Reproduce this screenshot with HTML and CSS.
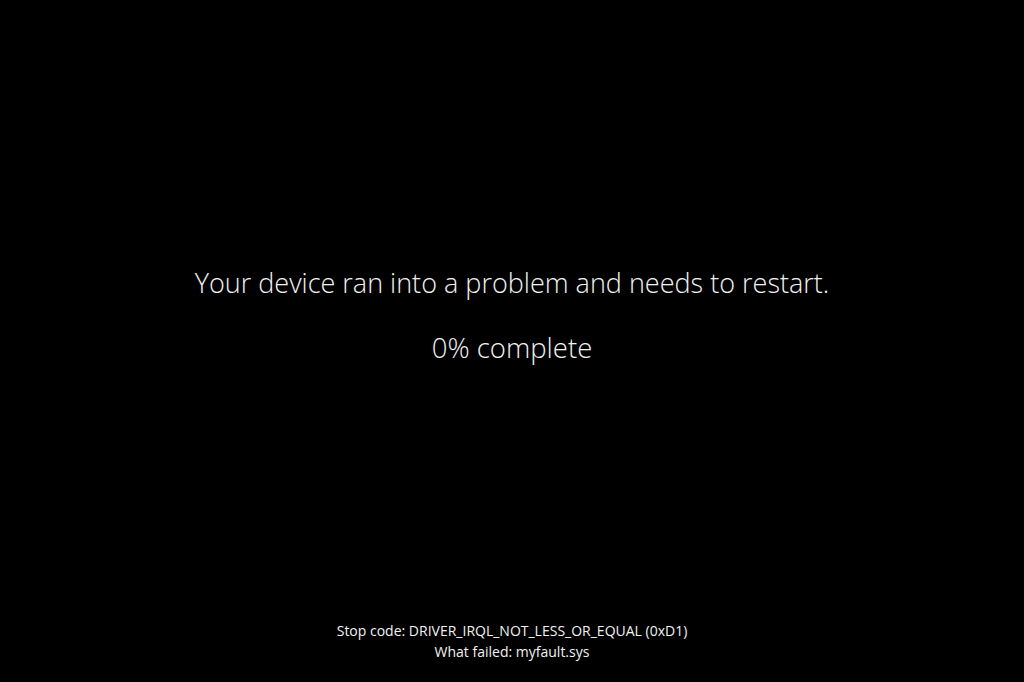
FILE: index.html
```html
<!DOCTYPE html>
<html>
<head>
<meta charset="utf-8">
<link rel="stylesheet" href="styles.css">
</head>
<body>
<div class="screen">
  <div class="main">
    <p class="msg">Your device ran into a problem and needs to restart.</p>
    <p class="progress">0% complete</p>
  </div>
  <div class="footer">
    <p class="line">Stop code: DRIVER_IRQL_NOT_LESS_OR_EQUAL (0xD1)</p>
    <p class="line">What failed: myfault.sys</p>
  </div>
</div>
</body>
</html>
```
FILE: styles.css
```css
html, body {
  margin: 0;
  padding: 0;
  background: #000;
}
.screen {
  width: 1024px;
  height: 682px;
  display: flex;
  flex-direction: column;
  align-items: center;
  color: #f2f2f2;
  font-family: "Open Sans", "Noto Sans", sans-serif;
  font-weight: 300;
}
.main {
  padding-top: 263px;
  text-align: center;
}
.msg {
  margin: 0;
  font-size: 27px;
  line-height: 40px;
}
.progress {
  margin: 25px 0 0;
  font-size: 27.5px;
  line-height: 40px;
}
.footer {
  margin-top: auto;
  padding-bottom: 20px;
  text-align: center;
}
.line {
  margin: 0;
  font-size: 14px;
  line-height: 21px;
  font-weight: 400;
}
```
